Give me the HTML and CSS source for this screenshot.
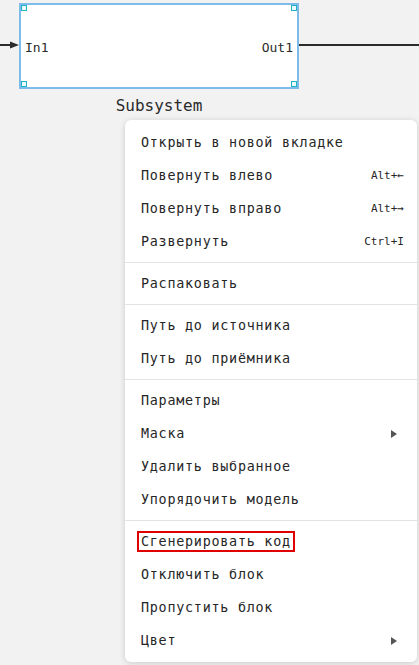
FILE: index.html
```html
<!DOCTYPE html>
<html lang="ru">
<head>
    <meta charset="UTF-8">
    <meta name="viewport" content="width=device-width, initial-scale=1.0">
    <title>Subsystem</title>
    <link rel="stylesheet" href="styles.css">
</head>
<body>
    <div class="canvas">
        <!-- input signal line with arrow head -->
        <svg class="wire wire-in" width="20" height="10" viewBox="0 0 20 10">
            <line x1="0" y1="5" x2="12" y2="5" stroke="#2b2b2b" stroke-width="2"/>
            <polygon points="10,1.5 19,5 10,8.5" fill="#2b2b2b"/>
        </svg>

        <div class="block">
            <span class="handle tl"></span>
            <span class="handle tr"></span>
            <span class="handle bl"></span>
            <span class="handle br"></span>
            <span class="port">In1</span>
            <span class="port">Out1</span>
        </div>
        <div class="block-name">Subsystem</div>

        <div class="wire wire-out"></div>

        <ul class="menu">
            <li class="item">Открыть в новой вкладке</li>
            <li class="item">Повернуть влево <span class="key">Alt+←</span></li>
            <li class="item">Повернуть вправо <span class="key">Alt+→</span></li>
            <li class="item">Развернуть <span class="key">Ctrl+I</span></li>
            <li class="sep"></li>
            <li class="item">Распаковать</li>
            <li class="sep"></li>
            <li class="item">Путь до источника</li>
            <li class="item">Путь до приёмника</li>
            <li class="sep"></li>
            <li class="item">Параметры</li>
            <li class="item">Маска <span class="sub"></span></li>
            <li class="item">Удалить выбранное</li>
            <li class="item">Упорядочить модель</li>
            <li class="sep"></li>
            <li class="item"><span class="marked">Сгенерировать код</span></li>
            <li class="item">Отключить блок</li>
            <li class="item">Пропустить блок</li>
            <li class="item">Цвет <span class="sub"></span></li>
        </ul>
    </div>
</body>
</html>
```

FILE: styles.css
```css
body {
    margin: 0;
    background: #f2f2f2;
    font-family: "DejaVu Sans Mono", "Liberation Mono", monospace;
    color: #2b2b2b;
    overflow: hidden;
}
.canvas {
    position: relative;
    width: 419px;
    height: 665px;
}

/* diagram */
.wire {
    position: absolute;
}
.wire-in {
    left: 0;
    top: 40px;
}
.wire-out {
    left: 299px;
    top: 44px;
    width: 120px;
    height: 2px;
    background: #2b2b2b;
}
.block {
    position: absolute;
    left: 19px;
    top: 3px;
    width: 268px;
    height: 82px;
    background: #fff;
    border: 2px solid #7dbbea;
    display: flex;
    align-items: center;
    justify-content: space-between;
    padding: 0 4px;
}
.port {
    font-size: 13px;
    color: #2b2b2b;
    margin-top: 3px;
}
.handle {
    position: absolute;
    width: 4px;
    height: 4px;
    border: 1px solid #1fb1c4;
    background: #eafafc;
}
.handle.tl { left: 0; top: 0; }
.handle.tr { right: 0; top: 0; }
.handle.bl { left: 0; bottom: 0; }
.handle.br { right: 0; bottom: 0; }
.block-name {
    position: absolute;
    left: 19px;
    top: 96px;
    width: 280px;
    text-align: center;
    font-size: 16px;
    line-height: 20px;
}

/* context menu */
.menu {
    position: absolute;
    left: 125px;
    top: 120px;
    width: 292px;
    margin: 0;
    padding: 6px 0 5px;
    list-style: none;
    background: #fff;
    border-radius: 6px;
    box-shadow: 0 1px 6px rgba(0, 0, 0, 0.16);
    box-sizing: border-box;
}
.item {
    height: 33px;
    display: flex;
    align-items: center;
    justify-content: space-between;
    padding: 0 13px 0 16px;
    font-size: 13.4px;
    letter-spacing: 0.75px;
    color: #262626;
}
.sep {
    height: 1px;
    margin: 4px 0;
    background: #e3e3e3;
}
.key {
    font-size: 11px;
    letter-spacing: 0;
}
.sub {
    width: 0;
    height: 0;
    margin-right: 7px;
    border-top: 4.5px solid transparent;
    border-bottom: 4.5px solid transparent;
    border-left: 6px solid #555;
}
.marked {
    outline: 2px solid #e00000;
    outline-offset: 1px;
    padding: 0 1px;
    margin-left: -1px;
}
```
